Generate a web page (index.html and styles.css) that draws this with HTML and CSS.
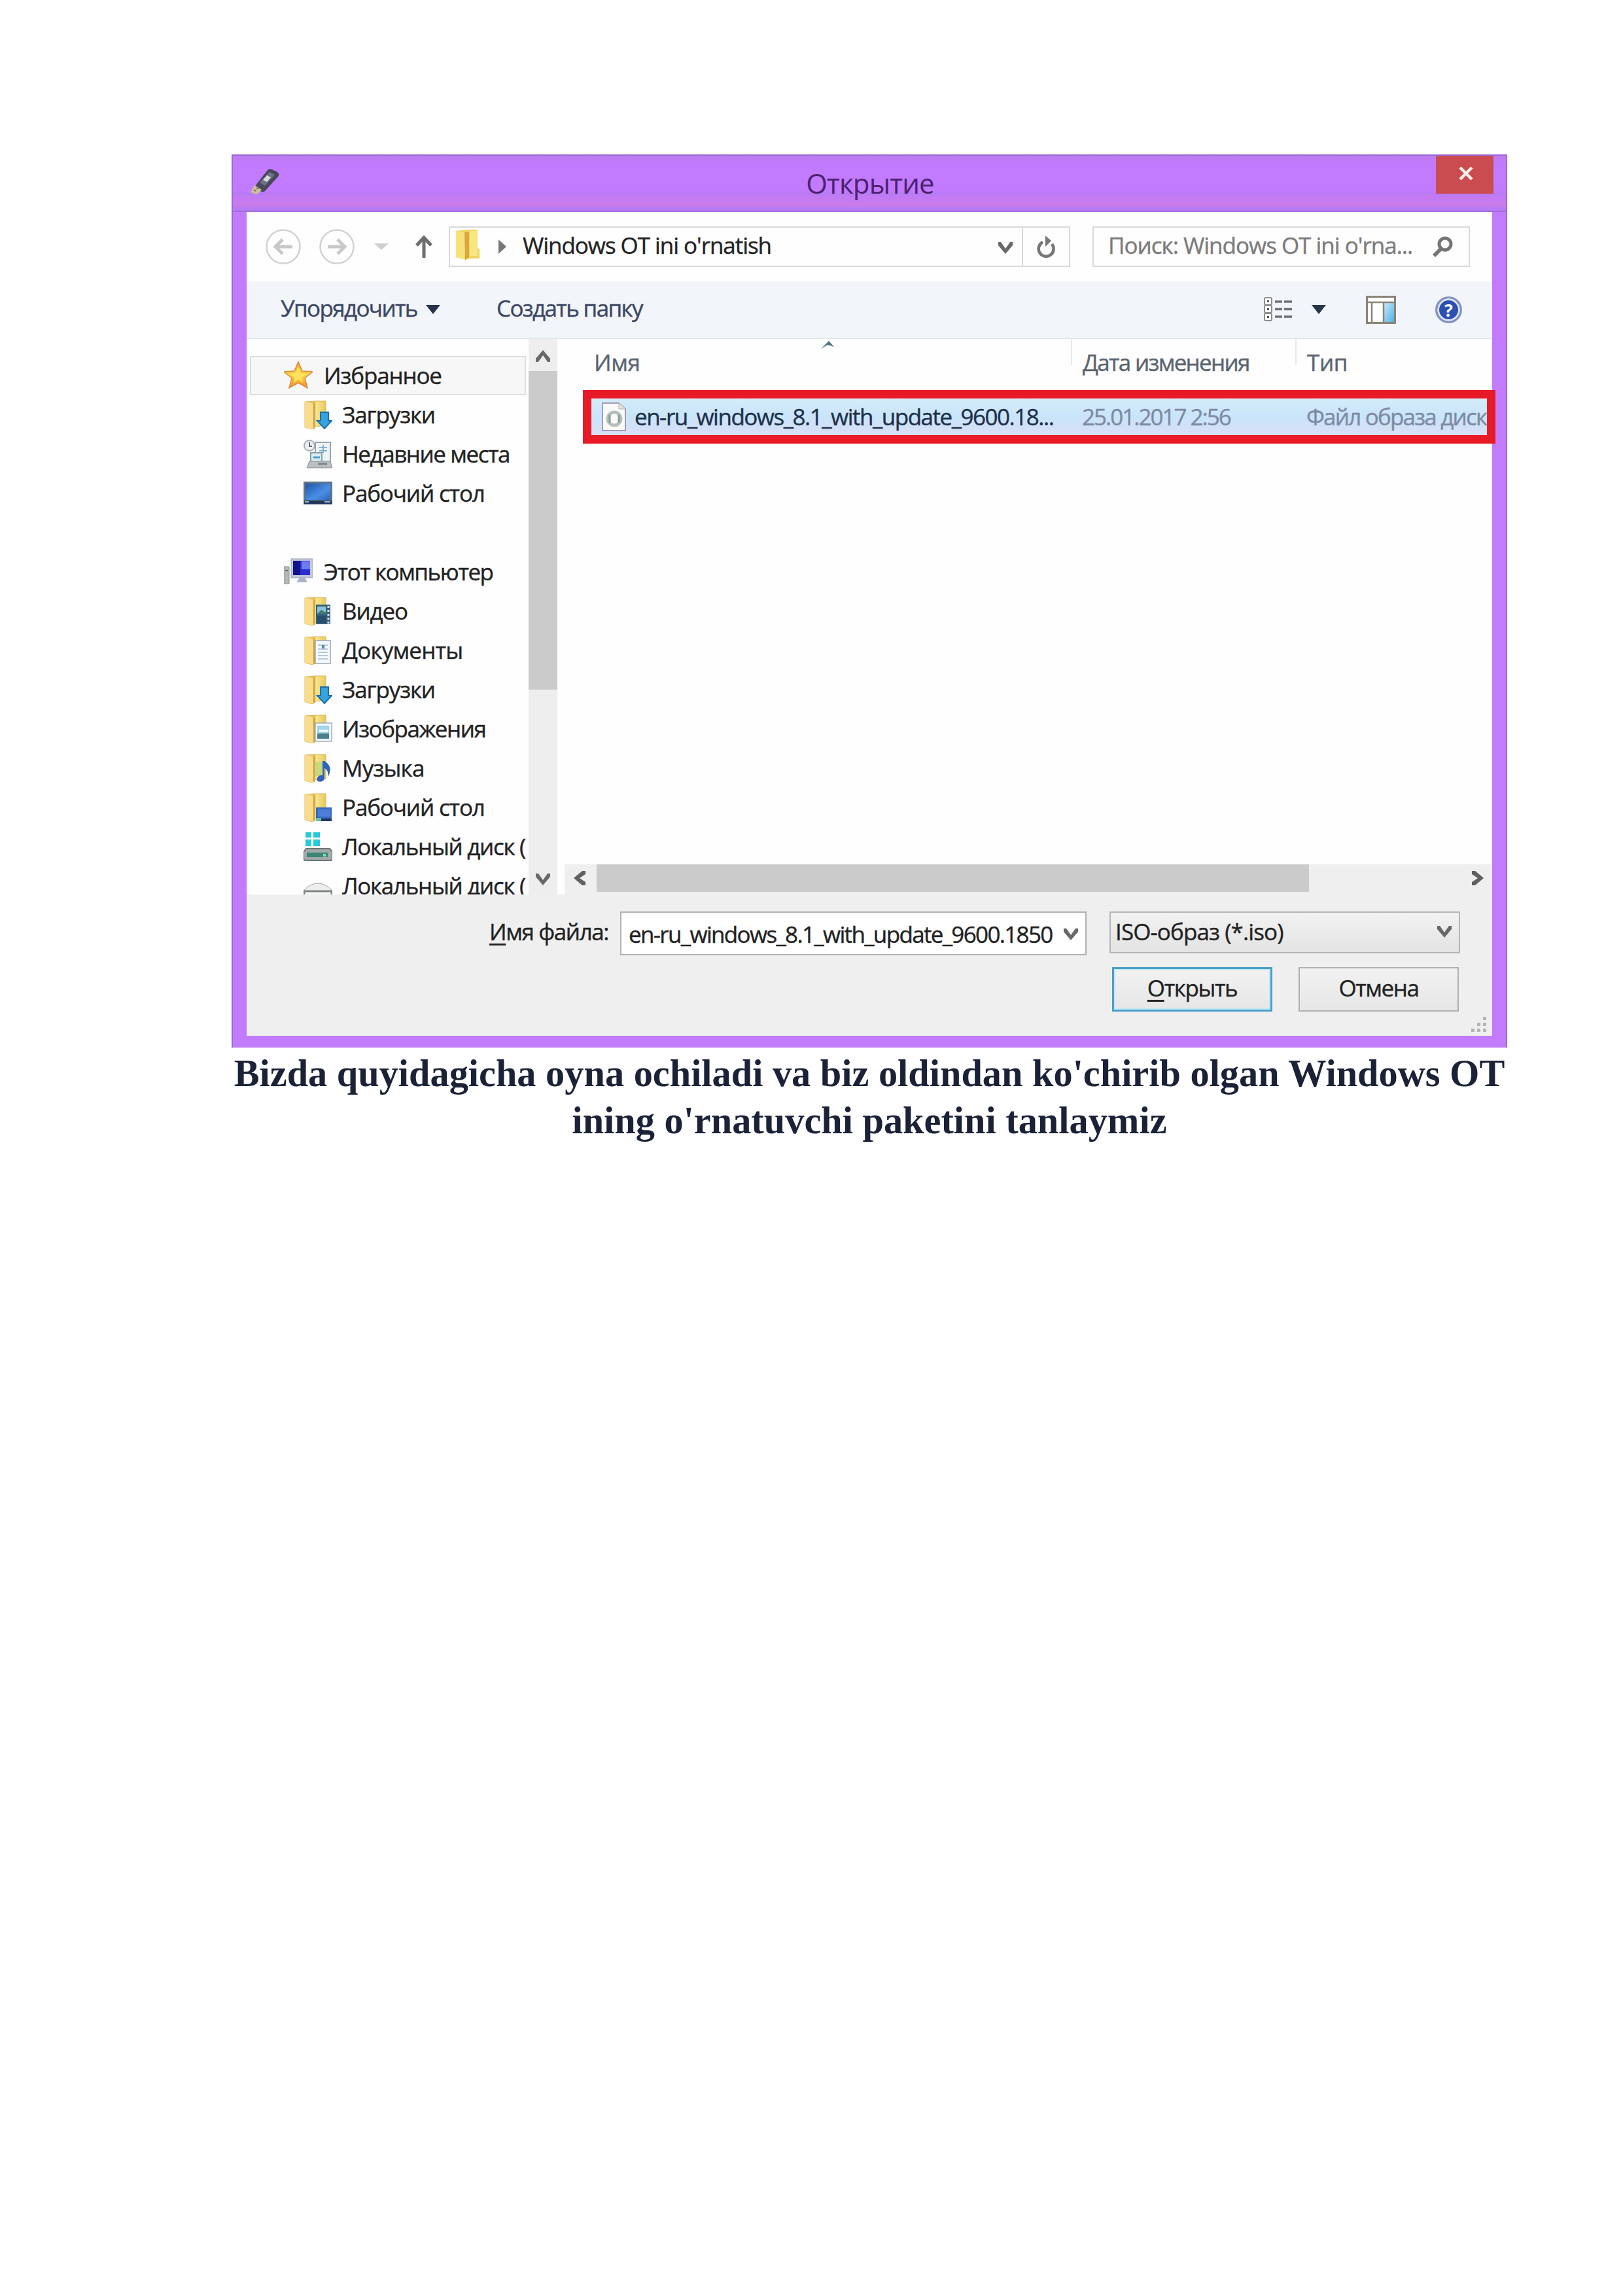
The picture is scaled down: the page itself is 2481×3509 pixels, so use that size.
FILE: index.html
```html
<!DOCTYPE html>
<html lang="ru">
<head>
<meta charset="utf-8">
<title>Открытие</title>
<link rel="stylesheet" href="styles.css">
</head>
<body>
<svg class="defs" width="0" height="0" aria-hidden="true">
  <defs>
    <linearGradient id="g-folder" x1="0" x2="1"><stop offset="0" stop-color="#fbe594"/><stop offset=".45" stop-color="#dfb951"/><stop offset=".55" stop-color="#f7e58c"/><stop offset="1" stop-color="#e6c861"/></linearGradient>
    <linearGradient id="g-star" x1="0" y1="0" x2="0" y2="1"><stop offset="0" stop-color="#f79a2a"/><stop offset=".5" stop-color="#ffd84a"/><stop offset="1" stop-color="#f08c2c"/></linearGradient>
    <linearGradient id="g-screen" x1="0" y1="0" x2="1" y2="1"><stop offset="0" stop-color="#1f55a8"/><stop offset=".6" stop-color="#4a8fe6"/><stop offset="1" stop-color="#2f66b8"/></linearGradient>
    <linearGradient id="g-pane" x1="0" x2="1" y1="0" y2="1"><stop offset="0" stop-color="#cdeafa"/><stop offset="1" stop-color="#4fb2e6"/></linearGradient>
    <symbol id="folder" viewBox="0 0 44 44">
      <path d="M2 2 L18 1 H34 V38 L18 40 L14 44 L2 41Z" fill="url(#g-folder)" stroke="#d8b95c"/>
      <path d="M2 2 L16 5 V44 L2 41Z" fill="#f9dc8c"/>
      <path d="M16 5 V43" stroke="#c9a045" stroke-width="2"/>
    </symbol>
    <symbol id="i-down" viewBox="0 0 44 44">
      <use href="#folder"/>
      <path d="M26 18 H38 V31 H43 L32 43 L21 31 H26Z" fill="#35a3dd" stroke="#1b70ac" stroke-width="2"/>
    </symbol>
    <symbol id="i-video" viewBox="0 0 44 44">
      <use href="#folder"/>
      <path d="M19 12 H41 V42 H19Z" fill="#38607a"/>
      <path d="M21 15 H34 V26 H21Z" fill="#8cc3dc"/><path d="M21 29 H34 V40 H21Z" fill="#274f6c"/>
      <path d="M21 26 L27 20 L34 24 V26Z" fill="#3f7c6a"/>
      <path d="M38 14 V41" stroke="#dfe8ee" stroke-width="3" stroke-dasharray="3 3"/>
    </symbol>
    <symbol id="i-doc" viewBox="0 0 44 44">
      <use href="#folder"/>
      <path d="M18 7 H41 V42 H18Z" fill="#f5f9fd" stroke="#9aa7b3" stroke-width="1.5"/>
      <path d="M22 14 H37 M22 20 H37 M22 25 H37 M22 30 H37 M22 35 H37" stroke="#9fb6cc" stroke-width="1.5"/>
      <path d="M28 14 h4 v5 h-4z" fill="#4a83c4"/>
    </symbol>
    <symbol id="i-pic" viewBox="0 0 44 44">
      <use href="#folder"/>
      <path d="M18 13 H43 V41 H18Z" fill="#f2f8fb" stroke="#9db0bb" stroke-width="1.5"/>
      <path d="M21 17 H39 V37 H21Z" fill="#a3d3e8"/><path d="M21 29 H39 V37 H21Z" fill="#4b7f8c"/><path d="M24 25 H37" stroke="#fff" stroke-width="3"/>
    </symbol>
    <symbol id="i-music" viewBox="0 0 44 44">
      <use href="#folder"/>
      <path d="M18 12 H32 V34 H18Z" fill="#c7d97a"/>
      <path d="M32 11 C42 17 43 27 37 35 C38 27 36 24 32 22 V38 C31 43 23 44 21 41 C19 35 26 31 29 33 V11Z" fill="#2c64bd"/>
    </symbol>
    <symbol id="i-deskfolder" viewBox="0 0 44 44">
      <use href="#folder"/>
      <path d="M19 22 H43 V40 H19Z" fill="#3868b8"/><path d="M22 25 H41 V36 H22Z" fill="#4c80d8"/><path d="M19 39 H43 V43 H19Z" fill="#1d3560"/><path d="M19 38 h8 v5 h-8z" fill="#6ec0b0"/>
    </symbol>
    <symbol id="i-recent" viewBox="0 0 44 44">
      <path d="M18 4 H41 V34 H18Z" fill="#eef4f6" stroke="#9aa6ab" stroke-width="2"/>
      <path d="M24 12 H36 M24 17 H36 M30 8 V20" stroke="#7fb2d0" stroke-width="2"/>
      <circle cx="9" cy="9" r="8" fill="#eef1f2" stroke="#a7aeb2" stroke-width="2"/><path d="M9 4 V10 H13" fill="none" stroke="#667" stroke-width="2"/>
      <path d="M11 20 H28 V34 H11Z" fill="#d9ecf4" stroke="#8aa0aa" stroke-width="2"/><path d="M15 27 H25" stroke="#4aa0c8" stroke-width="3"/>
      <path d="M9 33 H41 L44 43 H5Z" fill="#b9c0c2" stroke="#868e91"/><path d="M22 37 h14" stroke="#7b8488" stroke-width="3"/>
    </symbol>
    <symbol id="i-desktop" viewBox="0 0 44 44">
      <path d="M0 4 H44 V39 H0Z" fill="#5f7488"/><path d="M3 7 H41 V32 H3Z" fill="url(#g-screen)"/><path d="M1 33 H43 V38 H1Z" fill="#20365a"/><path d="M2 35 h6 M32 35 h9" stroke="#9fb4cc" stroke-width="2"/>
    </symbol>
    <symbol id="i-star" viewBox="0 0 44 44">
      <path d="M22 1 L28 15 L44 16 L32 26 L36 41 L22 33 L8 41 L12 26 L0 16 L16 15Z" fill="url(#g-star)" stroke="#dd8a3a" stroke-width="1.5"/>
      <path d="M22 8 L26 18 L35 19 L27 25 L29 33 L22 28 L15 33 L17 25 L9 19 L18 18Z" fill="#ffe35c"/>
    </symbol>
    <symbol id="i-pc" viewBox="0 0 44 44">
      <path d="M0 14 H8 V40 H0Z" fill="#b4b8b8" stroke="#8b9090"/><path d="M2 20 h4" stroke="#667" stroke-width="2"/>
      <path d="M11 2 H44 V31 H11Z" fill="#c3c9dc" stroke="#9aa0b4"/><path d="M14 5 H40 V27 H14Z" fill="#2b2fd0"/><path d="M14 5 H25 V27 H14Z" fill="#12128c"/><path d="M27 6 H40 V18 H27Z" fill="#6f7cf0"/>
      <path d="M24 31 H32 L36 38 H19Z" fill="#a9b2c6"/>
    </symbol>
    <symbol id="i-sysdisk" viewBox="0 0 44 44">
      <path d="M3 -1 H12 V8 H3Z M15 -1 H25 V8 H15Z M3 11 H12 V21 H3Z M15 11 H25 V21 H15Z" fill="#29c9d6"/>
      <path d="M4 25 H40 L44 30 V40 Q44 43 41 43 H3 Q0 43 0 40 V30Z" fill="#a2a9a9" stroke="#6d7575" stroke-width="2"/><path d="M5 31 H37 V38 H5Z" fill="#3c8577"/><path d="M30 33 h4 v4 h-4z" fill="#7ce0b4"/>
    </symbol>
    <symbol id="i-disk" viewBox="0 0 44 44">
      <path d="M8 22 Q22 14 36 22 L44 29 V42 H0 V29Z" fill="#eceeee" stroke="#a5aaaa"/><path d="M1 30 H43 V42 H1Z" fill="#f5f6f6" stroke="#7e8484" stroke-width="3"/><path d="M31 35 h6 v4 h-6z" fill="#7d9a8c"/>
    </symbol>
    <symbol id="chev" viewBox="0 0 22 18"><path d="M0 0 H4 L11 10 L18 0 H22 V5 L11 18 L0 5Z" fill="currentColor"/></symbol>
  </defs>
</svg>

<main class="page">
  <section class="dialog">
    <header class="titlebar">
      <svg class="usb" viewBox="0 0 46 40"><path d="M26 2 Q29 -1 33 1 L41 5 Q45 8 42 12 L23 33 Q20 37 15 34 L7 29 L8 25Z" fill="#48485a"/><path d="M29 5 L37 9 L22 26 L14 21Z" fill="#6e7286"/><path d="M25 10 L31 13 L25 20 L19 17Z" fill="#d5dbe0"/><path d="M6 25 L17 32 L10 39 L0 36Z" fill="#cbbf9c"/><path d="M5 32 l3 2 M9 29 l3 2" stroke="#78694c" stroke-width="2"/></svg>
      <h1 class="title">Открытие</h1>
      <button class="close"><svg viewBox="0 0 24 20"><path d="M3 1 L21 19 M21 1 L3 19" stroke="#fdf3e8" stroke-width="4.500"/></svg></button>
    </header>

    <div class="client">
      <nav class="nav">
        <svg class="round" viewBox="0 0 54 54"><circle cx="27" cy="27" r="25.5"/><path d="M41 27 H15 M26 16 L15 27 L26 38"/></svg>
        <svg class="round fwd" viewBox="0 0 54 54"><circle cx="27" cy="27" r="25.5"/><path d="M13 27 H39 M28 16 L39 27 L28 38"/></svg>
        <svg class="tri-faint" viewBox="0 0 22 10"><path d="M0 0H22L11 10Z" fill="#cfcfcf"/></svg>
        <svg class="up" viewBox="0 0 26 34"><path d="M13 34 V4 M2 15 L13 3 L24 15" fill="none" stroke="#6d6d6d" stroke-width="5"/></svg>
        <div class="address">
          <svg class="addr-folder" viewBox="0 0 38 46"><path d="M1 2 L16 0 H34 V28 L37 30 V44 H22 L16 46 L1 42Z" fill="#f0d460"/><path d="M1 2 L15 4 V46 L1 42Z" fill="#f9e27a"/><path d="M14 4 H21 V42 L15 46Z" fill="#dca63c"/><path d="M22 2 H34 V40 H22Z" fill="#f8e680"/></svg>
          <svg class="crumb" viewBox="0 0 12 22"><path d="M0 0L12 11L0 22Z" fill="#777"/></svg>
          <span class="txt path">Windows OT ini o'rnatish</span>
          <svg class="ic-chev"><use href="#chev"/></svg>
          <div class="refresh"><svg viewBox="0 0 28 34"><path d="M9 10 A11.5 11.5 0 1 0 23 13" fill="none" stroke="#777" stroke-width="4.6"/><path d="M13 0 L22 8 L13 17Z" fill="#777"/></svg></div>
        </div>
        <div class="search">
          <span class="txt find">Поиск: Windows OT ini o'rna...</span>
          <svg class="lens" viewBox="0 0 32 32"><circle cx="20" cy="12" r="9" fill="none" stroke="#757575" stroke-width="5"/><path d="M14 19 L3 30" stroke="#757575" stroke-width="6"/></svg>
        </div>
      </nav>

      <div class="toolbar">
        <span class="txt organize">Упорядочить</span>
        <svg class="tri" viewBox="0 0 22 14"><path d="M0 0H22L11 14Z" fill="#28324e"/></svg>
        <span class="txt newdir">Создать папку</span>
        <svg class="view" viewBox="0 0 43 38"><g fill="#fff" stroke="#8b8f92" stroke-width="2"><rect x="1" y="1" width="11" height="11" rx="2"/><rect x="1" y="13" width="11" height="11" rx="2"/><rect x="1" y="25" width="11" height="11" rx="2"/></g><path d="M5 6.500h3M5 18.500h3M5 30.500h3" stroke="#555" stroke-width="3"/><path d="M17 7h11M31 7h12M17 18.500h11M31 18.500h12M17 30h11M31 30h12" stroke="#6f7377" stroke-width="3.500"/></svg>
        <svg class="tri tri-view" viewBox="0 0 22 14"><path d="M0 0H22L11 14Z" fill="#24384a"/></svg>
        <svg class="pane" viewBox="0 0 46 43"><rect x="1.500" y="1.500" width="43" height="40" fill="#fff" stroke="#8a8378" stroke-width="3"/><rect x="27" y="11" width="16" height="29" fill="url(#g-pane)"/><path d="M2 10H44M9 10V41M27 10V41" stroke="#8a8378" stroke-width="2.500"/></svg>
        <div class="help">?</div>
      </div>

      <div class="body">
        <aside class="tree">
          <ul>
            <li class="root selected"><svg><use href="#i-star"/></svg><span class="txt">Избранное</span></li>
            <li><svg><use href="#i-down"/></svg><span class="txt">Загрузки</span></li>
            <li><svg><use href="#i-recent"/></svg><span class="txt tight">Недавние места</span></li>
            <li><svg><use href="#i-desktop"/></svg><span class="txt">Рабочий стол</span></li>
            <li class="gap"></li>
            <li class="root"><svg><use href="#i-pc"/></svg><span class="txt tight">Этот компьютер</span></li>
            <li><svg><use href="#i-video"/></svg><span class="txt">Видео</span></li>
            <li><svg><use href="#i-doc"/></svg><span class="txt loose">Документы</span></li>
            <li><svg><use href="#i-down"/></svg><span class="txt">Загрузки</span></li>
            <li><svg><use href="#i-pic"/></svg><span class="txt tight">Изображения</span></li>
            <li><svg><use href="#i-music"/></svg><span class="txt loose">Музыка</span></li>
            <li><svg><use href="#i-deskfolder"/></svg><span class="txt">Рабочий стол</span></li>
            <li><svg><use href="#i-sysdisk"/></svg><span class="txt disk">Локальный диск (</span></li>
            <li><svg><use href="#i-disk"/></svg><span class="txt disk">Локальный диск (</span></li>
          </ul>
        </aside>
        <div class="vscroll">
          <svg class="ic-chev flip"><use href="#chev"/></svg>
          <div class="vthumb"></div>
          <svg class="ic-chev vdown"><use href="#chev"/></svg>
        </div>
        <div class="files">
          <div class="columns">
            <div class="c-name"><span class="txt">Имя</span><svg class="sort" viewBox="0 0 20 12"><path d="M0 12L12 0L20 9L10 6Z" fill="#4f7480"/></svg></div>
            <div class="c-date"><span class="txt">Дата изменения</span></div>
            <div class="c-type"><span class="txt">Тип</span></div>
          </div>
          <div class="file">
            <svg class="iso" viewBox="0 0 37 44"><path d="M1 1H26L36 10V43H1Z" fill="#fafafa" stroke="#a39bb4" stroke-width="2"/><path d="M26 1V10H36" fill="#e4e8e0" stroke="#a9b2a6"/><circle cx="19" cy="25" r="10" fill="none" stroke="#b4c0bc" stroke-width="5"/><path d="M12 19v12M26 19v12" stroke="#8a9a93" stroke-width="3"/></svg>
            <span class="txt f-name">en-ru_windows_8.1_with_update_9600.18...</span>
            <span class="txt f-date">25.01.2017 2:56</span>
            <span class="txt f-type">Файл образа диск</span>
          </div>
          <div class="hscroll">
            <svg class="side" viewBox="0 0 18 22"><path d="M13 0 H18 V5 L9 11 L18 17 V22 H13 L0 11Z" fill="#606060"/></svg>
            <div class="hthumb"></div>
            <svg class="side right" viewBox="0 0 18 22"><path d="M5 0 H0 V5 L9 11 L0 17 V22 H5 L18 11Z" fill="#606060"/></svg>
          </div>
        </div>
      </div>

      <footer class="footer">
        <div class="line">
          <label class="txt"><u>И</u>мя файла:</label>
          <div class="combo"><span class="txt">en-ru_windows_8.1_with_update_9600.1850</span><svg class="ic-chev"><use href="#chev"/></svg></div>
          <div class="select"><span class="txt">ISO-образ (*.iso)</span><svg class="ic-chev"><use href="#chev"/></svg></div>
        </div>
        <div class="actions">
          <button class="btn primary"><span class="txt"><u>О</u>ткрыть</span></button>
          <button class="btn"><span class="txt">Отмена</span></button>
        </div>
        <svg class="grip" viewBox="0 0 24 24"><path d="M18 0h5v5h-5zM9 9h5v5H9zM18 9h5v5h-5zM0 18h5v5H0zM9 18h5v5H9zM18 18h5v5h-5z" fill="#b4b4b4"/></svg>
      </footer>
    </div>
  </section>
  <p class="caption">Bizda quyidagicha oyna ochiladi va biz oldindan ko'chirib olgan Windows OT<br>ining o'rnatuvchi paketini tanlaymiz</p>
</main>
</body>
</html>
```
FILE: styles.css
```css
* { box-sizing: border-box; }
body { margin: 0; background: #fff; font-family: "Open Sans", "Noto Sans", sans-serif; }
svg { display: block; flex: none; overflow: visible; }
button { font: inherit; padding: 0; margin: 0; border-radius: 0; }
ul { list-style: none; margin: 0; padding: 0; }
.defs { position: absolute; }

.page { width: 2481px; height: 3509px; padding: 236px 177px 0 354px; overflow: hidden; }
.txt { font-size: 35px; line-height: 56px; white-space: pre; color: #222; letter-spacing: -1.15px; -webkit-text-stroke: .4px currentColor; }
u { text-decoration-thickness: 3px; text-underline-offset: 5px; }

.dialog {
  width: 1950px; height: 1365px;
  display: flex; flex-direction: column;
  padding: 0 23px 18px;
  background: #c27afe;
  box-shadow: inset 2px 2px 0 #9b68d6, inset -2px 0 0 #9b68d6;
}
.titlebar {
  height: 86px; flex: none; display: flex; align-items: flex-start;
  margin: 2px -21px 0; padding: 0 19px 0 27px;
  background: linear-gradient(#bd7cf0 0, #c27afe 12px, #c27afe 54px, #b87bf2 58px, #c47af4 64px, #c97bea 76px, #b97af8 80px, #b97af8 83px, #9b6bd0 86px);
}
.usb { width: 46px; height: 40px; margin-top: 20px; }
.title { flex: 1; margin: 0; text-align: center; font-weight: 400; font-size: 42px; line-height: 84px; letter-spacing: -.8px; color: #4b2270; padding-left: 36px; }
.close { width: 88px; height: 58px; border: 0; background: #ca4c50; display: flex; align-items: center; justify-content: center; padding-bottom: 4px; }
.close svg { width: 24px; height: 20px; margin-left: 4px; }

.client { flex: 1; display: flex; flex-direction: column; background: #fefefe; min-height: 0; }

.nav { height: 106px; flex: none; display: flex; align-items: center; padding: 0 34px 1px 29px; }
.round { width: 54px; height: 54px; fill: none; stroke: #c8c8c8; stroke-width: 5; }
.round circle { stroke-width: 2.5; stroke: #d2d2d2; }
.fwd { margin-left: 28px; }
.tri-faint { width: 22px; height: 10px; margin-left: 30px; }
.up { width: 26px; height: 34px; margin-left: 41px; }
.address { width: 950px; height: 62px; margin-left: 25px; border: 2px solid #d9d9d9; display: flex; align-items: center; padding-left: 8px; }
.addr-folder { width: 38px; height: 46px; margin-bottom: 6px; }
.crumb { width: 12px; height: 22px; margin-left: 28px; }
.path { margin-left: 25px; flex: 1; padding-bottom: 3px; letter-spacing: -1.05px; }
.ic-chev { width: 22px; height: 18px; color: #686868; }
.address .ic-chev { margin-right: 14px; margin-top: 4px; }
.refresh { width: 72px; height: 58px; border-left: 2px solid #d9d9d9; display: flex; align-items: center; justify-content: center; }
.refresh svg { width: 28px; height: 34px; }
.search { width: 577px; height: 62px; margin-left: 34px; border: 2px solid #d9d9d9; display: flex; align-items: center; padding: 0 24px 0 22px; justify-content: space-between; }
.find { color: #7b7b7b; padding-bottom: 3px; letter-spacing: -1px; }
.lens { width: 32px; height: 32px; }

.toolbar { height: 88px; flex: none; background: #f2f5f9; border-bottom: 2px solid #e4e7e9; display: flex; align-items: center; padding: 0 46px 0 52px; }
.toolbar .txt { color: #3c4764; padding-bottom: 5px; letter-spacing: -1.65px; }
.organize { width: 206px; }
.tri { width: 22px; height: 14px; margin-left: 16px; }
.newdir { margin-left: 86px; flex: 1; }
.view { width: 43px; height: 38px; }
.tri-view { margin-left: 30px; }
.pane { width: 46px; height: 43px; margin-left: 61px; }
.help { width: 41px; height: 41px; margin-left: 60px; border-radius: 50%; background: #2c50b0; border: 3px solid #8492c8; box-shadow: inset 0 0 0 3px #dfe5f5; color: #fff; font-weight: 700; font-size: 27px; line-height: 35px; text-align: center; }

.body { height: 849px; flex: none; display: flex; }
.tree { width: 431px; flex: none; overflow: hidden; padding: 26px 4px 0 5px; }
.tree li { height: 60px; display: flex; align-items: center; padding-left: 82px; gap: 15px; }
.tree li svg { width: 44px; height: 44px; }
.tree .root { padding-left: 52px; gap: 17px; }
.tree .selected { background: #f7f7f7; border: 2px solid #dedede; padding-left: 50px; }
.tree .tight { letter-spacing: -1.45px; }
.tree .loose { letter-spacing: -.8px; }
.tree .disk { letter-spacing: -1.3px; }
.vscroll { width: 44px; flex: none; background: #eee; display: flex; flex-direction: column; align-items: center; }
.flip { transform: scaleY(-1); margin: 17px 0 14px; }
.vthumb { width: 44px; height: 487px; background: #cbcbcb; }
.vdown { margin-top: 281px; }
.files { flex: 1; min-width: 0; margin-left: 8px; display: flex; flex-direction: column; }
.columns { display: flex; height: 78px; }
.columns .txt { color: #5b6470; line-height: 72px; letter-spacing: -.4px; }
.c-name { width: 777px; flex: none; padding-left: 48px; display: flex; }
.sort { width: 20px; height: 12px; margin-left: 277px; margin-top: 3px; }
.c-date, .c-type { height: 40px; border-left: 2px solid #e3eaef; padding-left: 16px; }
.c-date { width: 343px; flex: none; }
.columns .c-date .txt { letter-spacing: -1.7px; }
.file {
  width: 1395px; height: 82px; margin-left: 31px; flex: none;
  border: 13px solid #e81a27; background: linear-gradient(#d5ecf9, #c9e4fa 50%, #d9dff5) padding-box;
  display: flex; align-items: center; padding-left: 16px; position: relative;
}
.iso { width: 37px; height: 44px; }
.f-name { margin-left: 13px; width: 684px; color: #20304a; letter-spacing: -1.5px; }
.f-date { width: 343px; color: #7d8ba3; letter-spacing: -2px; }
.f-type { color: #7d8ba3; letter-spacing: -1.8px; }
.hscroll { height: 46px; margin-top: auto; background: #efefef; display: flex; align-items: center; padding: 0 13px 4px 14px; margin-left: 3px; }
.side { width: 18px; height: 22px; }
.hthumb { width: 1089px; height: 42px; background: #cbcbcb; margin-left: 17px; }
.right { margin-left: auto; }

.footer { flex: 1; background: #efefef; padding: 26px 49px 0 371px; position: relative; }
.line { display: flex; height: 67px; }
.line label { width: 200px; flex: none; line-height: 62px; letter-spacing: -1.4px; }
.combo { width: 713px; flex: none; height: 67px; border: 2px solid #b2b2b2; background: #fff; display: flex; align-items: center; padding: 2px 11px 0; justify-content: space-between; }
.combo .txt { letter-spacing: -1.67px; }
.select { width: 536px; flex: none; height: 64px; margin-left: 35px; border: 2px solid #b5b5b5; background: linear-gradient(#f2f2f2, #e3e3e3); display: flex; align-items: center; justify-content: space-between; padding: 0 11px 2px 7px; }
.select .txt { letter-spacing: -.9px; }
.actions { display: flex; justify-content: flex-end; gap: 40px; margin-top: 18px; padding-right: 2px; }
.btn { width: 245px; height: 68px; border: 2px solid #b0b0b0; background: linear-gradient(#f2f2f2, #e6e6e6); padding-bottom: 5px; }
.btn .txt { letter-spacing: -1.4px; }
.primary { border: 3px solid #4a9fc9; box-shadow: inset 0 0 0 2px #bfeaf8; }
.grip { position: absolute; right: 8px; bottom: 5px; width: 24px; height: 24px; }

.caption { margin: 4px -20px 0; text-align: center; font: 700 58.33px/72px "Liberation Serif", serif; color: #1b2238; white-space: nowrap; }
```
